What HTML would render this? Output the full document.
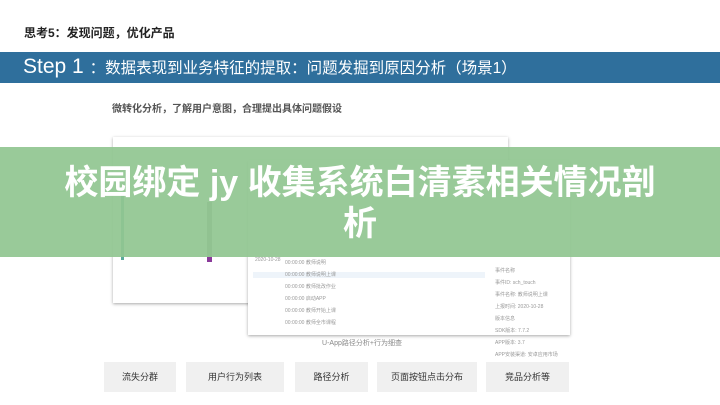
<!DOCTYPE html><html><head><meta charset="utf-8"><style>
body{margin:0;width:720px;height:405px;background:#fff;position:relative;overflow:hidden;font-family:"Liberation Sans","Noto Sans CJK SC",sans-serif}
.a{position:absolute}
.btn{position:absolute;top:362px;height:30px;background:#f0f0f0;font-size:9px;color:#333;text-align:center;line-height:30px}
.row{position:absolute;height:1px;background:#eee}
.t{position:absolute;font-size:5px;color:#999}
</style></head><body>
<div class="a" style="left:24px;top:24px;font-size:12px;font-weight:bold;color:#222">思考5：发现问题，优化产品</div>
<div class="a" style="left:0;top:52px;width:720px;height:31px;background:#2f6f9c"></div>
<div class="a" style="left:23px;top:54px;font-size:21px;color:#fff;line-height:26px">Step 1 <span style="font-size:15.5px">：数据表现到业务特征的提取：问题发掘到原因分析（场景1）</span></div>
<div class="a" style="left:112px;top:100px;font-size:10px;color:#555;font-weight:bold">微转化分析，了解用户意图，合理提出具体问题假设</div>
<div class="a" style="left:113px;top:137px;width:395px;height:166px;background:#fff;box-shadow:0 1px 3px rgba(0,0,0,.35)"></div>
<div class="a" style="left:121px;top:195px;width:3px;height:65px;background:#5aaa9a"></div>
<div class="a" style="left:207px;top:202px;width:5px;height:60px;background:#888"></div>
<div class="a" style="left:207px;top:257px;width:5px;height:5px;background:#8a3a9a"></div>
<div class="a" style="left:248px;top:160px;width:322px;height:175px;background:#fff;box-shadow:0 1px 3px rgba(0,0,0,.35)"></div>
<div class="row" style="left:253px;top:272px;width:232px;background:#eef4fa;height:6px"></div>
<div class="t" style="left:255px;top:257px">2020-10-28</div>
<div class="t" style="left:285px;top:259px">00:00:00 教师说明</div>
<div class="t" style="left:285px;top:271px">00:00:00 教师说明上课</div>
<div class="t" style="left:285px;top:283px">00:00:00 教师批改作业</div>
<div class="t" style="left:285px;top:295px">00:00:00 启动APP</div>
<div class="t" style="left:285px;top:307px">00:00:00 教师开始上课</div>
<div class="t" style="left:285px;top:319px">00:00:00 教师全市课程</div>
<div class="t" style="left:495px;top:265px;line-height:12px">事件名称<br>事件ID: sch_touch<br>事件名称: 教师说明上课<br>上报时间: 2020-10-28<br>版本信息<br>SDK版本: 7.7.2<br>APP版本: 3.7<br>APP安装渠道: 安卓应用市场</div>
<div class="a" style="left:0;top:147px;width:720px;height:110px;background:rgba(145,198,145,.93)"></div>
<div class="a" style="left:0;top:163px;width:720px;text-align:center;font-size:34px;font-weight:bold;color:#fff;line-height:41px">校园绑定 jy 收集系统白清素相关情况剖<br>析</div>
<div class="a" style="left:0;top:338px;width:720px;text-align:center;font-size:7px;color:#888;padding-left:2px">U-App路径分析+行为细查</div>
<div class="btn" style="left:104px;width:72px">流失分群</div>
<div class="btn" style="left:186px;width:98px">用户行为列表</div>
<div class="btn" style="left:295px;width:73px">路径分析</div>
<div class="btn" style="left:377px;width:100px">页面按钮点击分布</div>
<div class="btn" style="left:486px;width:83px">竞品分析等</div>
</body></html>
